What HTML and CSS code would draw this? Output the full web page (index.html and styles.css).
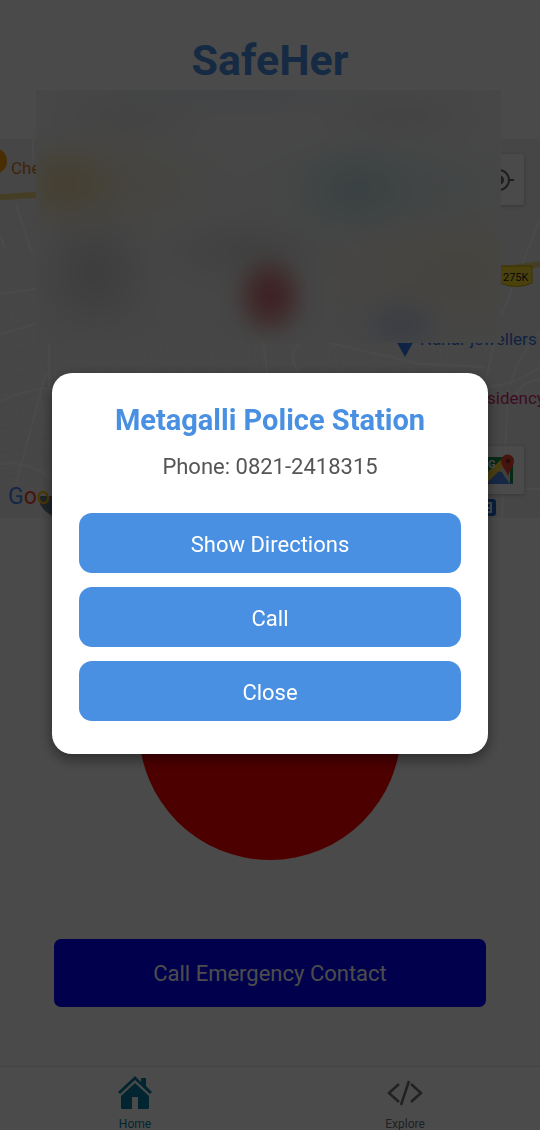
FILE: index.html
```html
<!DOCTYPE html>
<html lang="en">
<head>
<meta charset="utf-8">
<meta name="viewport" content="width=device-width, initial-scale=1">
<title>SafeHer</title>
<link rel="stylesheet" href="styles.css">
</head>
<body>
<div class="app">
  <header class="header"><h1 class="brand">SafeHer</h1></header>
  <main class="content">
    <section class="map" aria-label="Map">
      <svg class="map-tiles" viewBox="0 0 540 379" preserveAspectRatio="xMidYMid slice">
        <defs>
          <pattern id="blocks" width="37" height="29" patternUnits="userSpaceOnUse">
            <path d="M0 4H37M0 13H24M8 21H37M4 0V29M13 4V21M19 0V13M27 4V29M33 0V21" class="lane"/>
          </pattern>
          <pattern id="rows" width="60" height="24" patternUnits="userSpaceOnUse" patternTransform="rotate(-7)">
            <path d="M0 3H60M0 9H45M12 15H60M0 20H36M9 0V24M50 3V20" class="lane"/>
          </pattern>
        </defs>
        <rect width="540" height="379" fill="#ebebeb"/>
        <path d="M0 115H36V250H60V379H0Z" fill="url(#rows)"/>
        <path d="M36 200H470V379H36Z" fill="url(#blocks)"/>
        <path d="M0 58C14 58 22 56 37 56" class="highway"/>
        <path d="M16 66L32 115M33 0V20M0 95L5 110M0 155L37 150M0 195L37 185M49 200V250M46 234L16 345M0 262Q40 246 52 250M0 325Q30 322 52 340M263 200L268 240M300 204Q286 215 300 236M330 204L420 225L485 228M539 83L500 180L486 240M539 193Q516 220 511 245M488 248Q515 246 540 228M508 250L502 379M515 263Q514 245 540 240M480 350H540" class="road"/>
        <path d="M500 130Q525 128 540 125" class="highway"/>
        <circle cx="-6" cy="22" r="13" fill="#f29900"/>
        <text x="11" y="35" class="poi food">Che</text>
        <path d="M484 127H532V144Q516 151 500 144H484Z" fill="#fbdb2d" stroke="#c8a600"/>
        <text x="503" y="142" class="shield">275K</text>
        <path d="M395 200H415L405 218Z" fill="#3478e8"/>
        <text x="420" y="206" class="poi shop">Nahar jewellers</text>
        <text x="487" y="265" class="poi hotel">sidency</text>
        <path d="M40 365Q44 374 58 379V357H40Z" fill="#607d86"/>
        <text x="8" y="365" class="google"><tspan fill="#4285f4">G</tspan><tspan fill="#ea4335">o</tspan><tspan fill="#fbbc05">o</tspan></text>
        <g class="control"><rect x="473" y="15" width="51" height="51" rx="2" fill="#f8f8f8"/></g>
        <g fill="none" stroke="#666" stroke-width="2"><circle cx="499" cy="41" r="10"/><path d="M509 41H514M499 31V26M499 51V56M489 41H484"/></g>
        <circle cx="499" cy="41" r="5" fill="#666"/>
        <g class="control"><rect x="473" y="307" width="51" height="48" rx="2" fill="#f8f8f8"/></g>
        <path d="M483 318H513V345H483Z" fill="#128d4b"/>
        <path d="M511 322L486 348H480V340L504 318Z" fill="#fbd23c"/>
        <path d="M499 332L512 345H486Z" fill="#4b82e8"/>
        <path d="M500 331L510 321V345Z" fill="#d5d5d5"/>
        <path d="M508 338C507 331 501 328 501 322A6 6 0 0 1 514 322C514 328 509 331 508 338Z" fill="#e94335"/>
        <circle cx="508" cy="322" r="2" fill="#8c1f16"/>
        <text x="488" y="329" class="map-g">G</text>
        <rect x="478" y="360" width="18" height="17" rx="3" fill="#1a67d2"/>
        <path d="M486 364H491V373H486M486 369H491" fill="none" stroke="#fff" stroke-width="2"/>
      </svg>
      <div class="frost"></div>
    </section>
    <button class="sos" type="button" aria-label="SOS"></button>
    <button class="emergency" type="button">Call Emergency Contact</button>
  </main>
  <nav class="tabs">
    <a class="tab tab-active" href="#home">
      <svg class="tab-icon" viewBox="0 0 36 36"><path d="M18 1L24 7V3H29V11L35 17L33 19L18 5L3 19L1 17Z" fill="currentColor"/><path d="M18 8L32 21V33Q32 34 31 34H21V22H15V34H5Q4 34 4 33V21Z" fill="currentColor"/></svg>
      <span>Home</span>
    </a>
    <a class="tab" href="#explore">
      <svg class="tab-icon" viewBox="0 0 36 36"><path d="M12 9L2 18L12 27M24 9L34 18L24 27M22 6L14 30" fill="none" stroke="currentColor" stroke-width="2.5"/></svg>
      <span>Explore</span>
    </a>
  </nav>
</div>
<div class="overlay">
  <section class="modal" role="dialog" aria-modal="true" aria-labelledby="place">
    <h2 class="modal-title" id="place">Metagalli Police Station</h2>
    <p class="modal-phone">Phone: 0821-2418315</p>
    <div class="actions">
      <button class="action" type="button">Show Directions</button>
      <button class="action" type="button">Call</button>
      <button class="action" type="button">Close</button>
    </div>
  </section>
</div>
</body>
</html>
```
FILE: styles.css
```css
* { box-sizing: border-box; }
body { margin: 0; font-family: Roboto, "Liberation Sans", sans-serif; }
button { border: 0; padding: 0; font: inherit; cursor: pointer; }

.app { display: flex; flex-direction: column; min-height: 100vh; background: #f8f8f8; }
.header { padding: 34px 16px 53px; text-align: center; }
.brand { margin: 0; font-size: 43px; line-height: 52px; font-weight: 700; color: #4a90e2; }
.content { display: flex; flex-direction: column; align-items: center; }

.map { position: relative; align-self: stretch; }
.map-tiles { display: block; width: 100%; height: 379px; }
.lane { fill: none; stroke: #f8f8f8; stroke-width: 1; opacity: 0.45; }
.road { fill: none; stroke: #fff; stroke-width: 2; opacity: 0.6; }
.highway { fill: none; stroke: #e8cf78; stroke-width: 6; }
.poi { font-size: 17px; }
.food { fill: #d9771f; }
.shop { fill: #3672d9; }
.hotel { fill: #d0296b; }
.shield { font-size: 11px; font-weight: 400; fill: #222; }
.google { font-size: 23px; font-weight: 400; }
.map-g { font-size: 11px; font-weight: 700; fill: #fff; }
.control { filter: drop-shadow(0 1px 2px rgba(0, 0, 0, 0.25)); }

/* Frosted panel laid over the header edge and the map */
.frost {
  position: absolute;
  top: -49px;
  left: 36px;
  right: 39px;
  height: 253px;
  overflow: hidden;
  background: #ececec;
}
.frost::before {
  content: "";
  position: absolute;
  inset: 0;
  filter: blur(9px);
  background:
    radial-gradient(ellipse 38px 44px at 234px 206px, rgba(195, 60, 65, 0.85), rgba(195, 60, 65, 0.5) 50%, transparent),
    radial-gradient(ellipse 60px 50px at 318px 99px, rgba(165, 208, 212, 0.5), transparent),
    radial-gradient(ellipse 140px 55px at 350px 98px, rgba(190, 220, 222, 0.5), transparent),
    radial-gradient(ellipse 65px 45px at 24px 94px, rgba(225, 198, 115, 0.6), transparent),
    radial-gradient(ellipse 120px 55px at 70px 92px, rgba(230, 215, 175, 0.5), transparent),
    radial-gradient(ellipse 65px 70px at 58px 182px, rgba(195, 195, 195, 0.8), transparent),
    radial-gradient(ellipse 100px 40px at 210px 160px, rgba(205, 205, 205, 0.7), transparent),
    radial-gradient(ellipse 45px 35px at 365px 238px, rgba(150, 170, 225, 0.5), transparent),
    radial-gradient(ellipse 170px 70px at 440px 180px, rgba(235, 220, 180, 0.5), transparent),
    radial-gradient(ellipse 150px 22px at 210px 0, rgba(200, 215, 235, 0.7), transparent),
    radial-gradient(ellipse 90px 35px at 90px 25px, rgba(218, 218, 218, 0.7), transparent),
    radial-gradient(ellipse 90px 35px at 365px 25px, rgba(218, 218, 218, 0.7), transparent),
    linear-gradient(#efefef, #e8e8e8);
}

.sos { width: 262px; height: 262px; margin-top: 80px; border-radius: 50%; background: #ff0000; }
.emergency {
  width: 80%;
  min-height: 68px;
  margin: 79px 0 24px;
  border-radius: 7px;
  background: #0000ff;
  color: #fff;
  font-size: 22px;
}

.tabs { display: flex; margin-top: auto; border-top: 1px solid #e2e2e2; background: #fcfcfc; }
.tab {
  flex: 1;
  display: flex;
  flex-direction: column;
  align-items: center;
  gap: 7px;
  padding-top: 8px;
  color: #687076;
  font-size: 12px;
  line-height: 12px;
  text-decoration: none;
}
.tab-active { color: #0a7ea4; }
.tab-icon { width: 36px; height: 36px; }

.overlay {
  position: fixed;
  inset: 0;
  display: flex;
  align-items: center;
  justify-content: center;
  padding-bottom: 4px;
  background: rgba(0, 0, 0, 0.7);
}
.modal {
  width: calc(80% + 4px);
  padding: 27px 27px 33px;
  border-radius: 20px;
  background: #fff;
  box-shadow: 0 5px 14px rgba(0, 0, 0, 0.45);
  text-align: center;
}
.modal-title { margin: 0 0 13px; font-size: 29px; line-height: 40px; font-weight: 700; color: #4a90e2; }
.modal-phone { margin: 0 0 32px; font-size: 22px; line-height: 28px; color: #555; }
.actions { display: flex; flex-direction: column; gap: 14px; }
.action { min-height: 60px; padding-top: 3px; border-radius: 13px; background: #4a90e2; color: #fff; font-size: 22px; }
```
